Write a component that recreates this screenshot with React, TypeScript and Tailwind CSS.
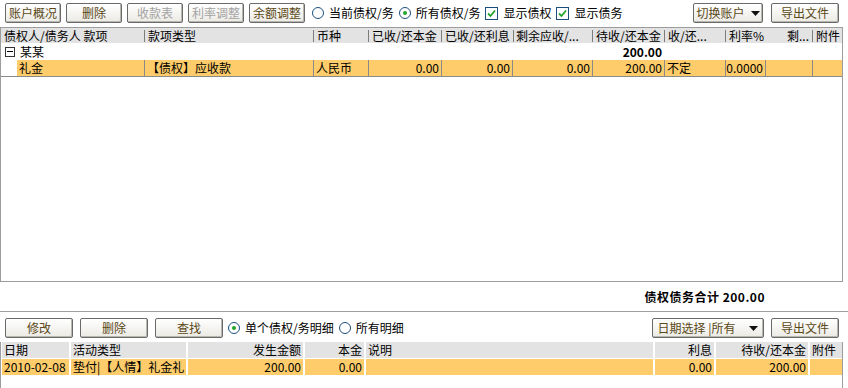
import React from "react";

/**
 * Column definitions for the upper (debt) grid
 */
interface TopCol {
  title: string;
  width: number;
  align: "left" | "right";
}

const topCols: TopCol[] = [
  { title: "债权人/债务人 款项", width: 144, align: "left" },
  { title: "款项类型", width: 169, align: "left" },
  { title: "币种", width: 55, align: "left" },
  { title: "已收/还本金", width: 73, align: "left" },
  { title: "已收/还利息", width: 71, align: "left" },
  { title: "剩余应收/...", width: 80, align: "left" },
  { title: "待收/还本金", width: 72, align: "left" },
  { title: "收/还...", width: 61, align: "left" },
  { title: "利率%", width: 40, align: "right" },
  { title: "剩...", width: 47, align: "right" },
  { title: "附件", width: 29, align: "left" },
];

const detailRow: { text: string; align: "left" | "right" }[] = [
  { text: "【债权】应收款", align: "left" },
  { text: "人民币", align: "left" },
  { text: "0.00", align: "right" },
  { text: "0.00", align: "right" },
  { text: "0.00", align: "right" },
  { text: "200.00", align: "right" },
  { text: "不定", align: "left" },
  { text: "0.0000", align: "right" },
  { text: "", align: "left" },
  { text: "", align: "left" },
];

/**
 * Column definitions for the lower (activity) grid
 */
const bottomCols: { title: string; value: string; width: number; align: "left" | "right" }[] = [
  { title: "日期", value: "2010-02-08", width: 67, align: "left" },
  { title: "活动类型", value: "垫付|【人情】礼金礼", width: 115, align: "left" },
  { title: "发生金额", value: "200.00", width: 115, align: "right" },
  { title: "本金", value: "0.00", width: 59, align: "right" },
  { title: "说明", value: "", width: 287, align: "left" },
  { title: "利息", value: "0.00", width: 59, align: "right" },
  { title: "待收/还本金", value: "200.00", width: 92, align: "right" },
  { title: "附件", value: "", width: 32, align: "left" },
];

const Btn: React.FC<{ w: string; disabled?: boolean; children: React.ReactNode }> = ({
  w,
  disabled,
  children,
}) => (
  <div
    className={`${w} flex h-[20px] shrink-0 items-center justify-center rounded-[2px] border border-[#6a6a6a] bg-gradient-to-b from-white to-[#ebeae4] shadow-[inset_-1px_-1px_0_#b9b8b0] ${
      disabled ? "text-[#a3a3a3]" : "text-[#5a4816]"
    }`}
  >
    {children}
  </div>
);

const Radio: React.FC<{ checked?: boolean; label: string }> = ({ checked, label }) => (
  <div className="flex shrink-0 items-center gap-[5px]">
    <div className="flex h-[12px] w-[12px] items-center justify-center rounded-full border border-[#1d4f7e] bg-white">
      {checked && <div className="h-[4px] w-[4px] rounded-full bg-[#22a52a]" />}
    </div>
    <span>{label}</span>
  </div>
);

const Check: React.FC<{ label: string }> = ({ label }) => (
  <div className="flex shrink-0 items-center gap-[5px]">
    <div className="flex h-[13px] w-[13px] items-center justify-center border border-[#1d4f7e] bg-white">
      <svg width="9" height="9" viewBox="0 0 9 9">
        <path d="M1 4.5 L3.5 7 L8 1.5" fill="none" stroke="#22a52a" strokeWidth="1.8" />
      </svg>
    </div>
    <span>{label}</span>
  </div>
);

const Caret: React.FC = () => (
  <svg width="9" height="5" viewBox="0 0 9 5" className="ml-[6px]">
    <path d="M0 0 L9 0 L4.5 5 Z" fill="#111" />
  </svg>
);

const App: React.FC = () => {
  return (
    <div
      className="flex h-[388px] w-[848px] flex-col overflow-hidden bg-white text-[12px] leading-[14px] text-black"
      style={{ fontFamily: '"Noto Sans CJK SC", "Noto Sans", sans-serif' }}
    >
      {/* Top toolbar */}
      <div className="flex h-[27px] shrink-0 items-start pt-[3px] pl-[5px] pr-[9px]">
        <div className="flex gap-[5px]">
          <Btn w="w-[56px]">账户概况</Btn>
          <Btn w="w-[56px]">删除</Btn>
          <Btn w="w-[56px]" disabled>
            收款表
          </Btn>
          <Btn w="w-[56px]" disabled>
            利率调整
          </Btn>
          <Btn w="w-[56px]">余额调整</Btn>
        </div>
        <div className="ml-[7px] flex h-[20px] items-center gap-[5px]">
          <Radio label="当前债权/务" />
          <Radio checked label="所有债权/务" />
          <Check label="显示债权" />
          <Check label="显示债务" />
        </div>
        <div className="ml-auto flex gap-[8px]">
          <Btn w="w-[70px]">
            切换账户
            <Caret />
          </Btn>
          <Btn w="w-[68px]">导出文件</Btn>
        </div>
      </div>

      {/* Upper grid */}
      <div className="flex h-[255px] w-[843px] shrink-0 flex-col border border-[#9c9c9c]">
        {/* Header */}
        <div className="flex h-[15px] bg-[#e3e3e3]">
          {topCols.map((c, i) => (
            <div key={i} className="flex items-center" style={{ width: c.width }}>
              <div
                className={`flex-1 whitespace-nowrap px-[3px] leading-[15px] ${
                  c.align === "right" ? "text-right" : ""
                }`}
              >
                {c.title}
              </div>
              {i < topCols.length - 1 && <div className="h-[12px] w-px bg-[#7d7d7d]" />}
            </div>
          ))}
        </div>

        {/* Group row */}
        <div className="flex h-[17px] items-center">
          <div className="ml-[4px] flex h-[10px] w-[10px] items-center justify-center border border-[#333]">
            <div className="h-px w-[6px] bg-black" />
          </div>
          <span className="ml-[5px] w-[126px]">某某</span>
          <div className="ml-[446px] w-[70px] text-right font-bold">200.00</div>
        </div>

        {/* Detail row */}
        <div className="flex h-[17px] border-b border-[#8a8a8a]">
          <div className="flex w-[144px]">
            <div className="w-[16px]" />
            <div className="flex flex-1 items-center border-r border-[#8a8a8a] bg-[#fecc6a] px-[2px]">
              礼金
            </div>
          </div>
          {detailRow.map((d, i) => (
            <div
              key={i}
              className={`flex items-center whitespace-nowrap bg-[#fecc6a] px-[2px] ${
                i < detailRow.length - 1 ? "border-r border-[#8a8a8a]" : ""
              } ${d.align === "right" ? "justify-end" : ""}`}
              style={{ width: topCols[i + 1].width }}
            >
              {d.text}
            </div>
          ))}
        </div>
      </div>

      {/* Totals */}
      <div className="flex h-[29px] shrink-0 items-center justify-end pr-[83px] font-bold tracking-[0.5px]">
        债权债务合计 200.00
      </div>

      <div className="h-px shrink-0 bg-[#a0a0a0]" />

      {/* Lower toolbar */}
      <div className="flex h-[30px] shrink-0 items-start pt-[6px] pl-[5px] pr-[9px]">
        <div className="flex gap-[7px]">
          <Btn w="w-[68px]">修改</Btn>
          <Btn w="w-[68px]">删除</Btn>
          <Btn w="w-[68px]">查找</Btn>
        </div>
        <div className="ml-[5px] flex h-[20px] items-center gap-[5px]">
          <Radio checked label="单个债权/务明细" />
          <Radio label="所有明细" />
        </div>
        <div className="ml-auto flex gap-[7px]">
          <Btn w="w-[112px]">
            日期选择 |所有
            <span className="ml-[8px]">
              <Caret />
            </span>
          </Btn>
          <Btn w="w-[68px]">导出文件</Btn>
        </div>
      </div>

      {/* Lower grid */}
      <div className="flex w-[843px] flex-1 flex-col border-x border-[#9c9c9c] pl-px">
        <div className="flex h-[16px] gap-[2px]">
          {bottomCols.map((c, i) => (
            <div
              key={i}
              className={`flex items-center bg-[#e3e3e3] px-[2px] ${
                c.align === "right" ? "justify-end" : ""
              }`}
              style={{ width: c.width }}
            >
              {c.title}
            </div>
          ))}
        </div>
        <div className="mt-px flex h-[16px] gap-[2px]">
          {bottomCols.map((c, i) => (
            <div
              key={i}
              className={`flex items-center whitespace-nowrap bg-[#fecc6a] px-[2px] ${
                c.align === "right" ? "justify-end" : ""
              }`}
              style={{ width: c.width }}
            >
              {c.value}
            </div>
          ))}
        </div>
      </div>
    </div>
  );
};

export default App;
